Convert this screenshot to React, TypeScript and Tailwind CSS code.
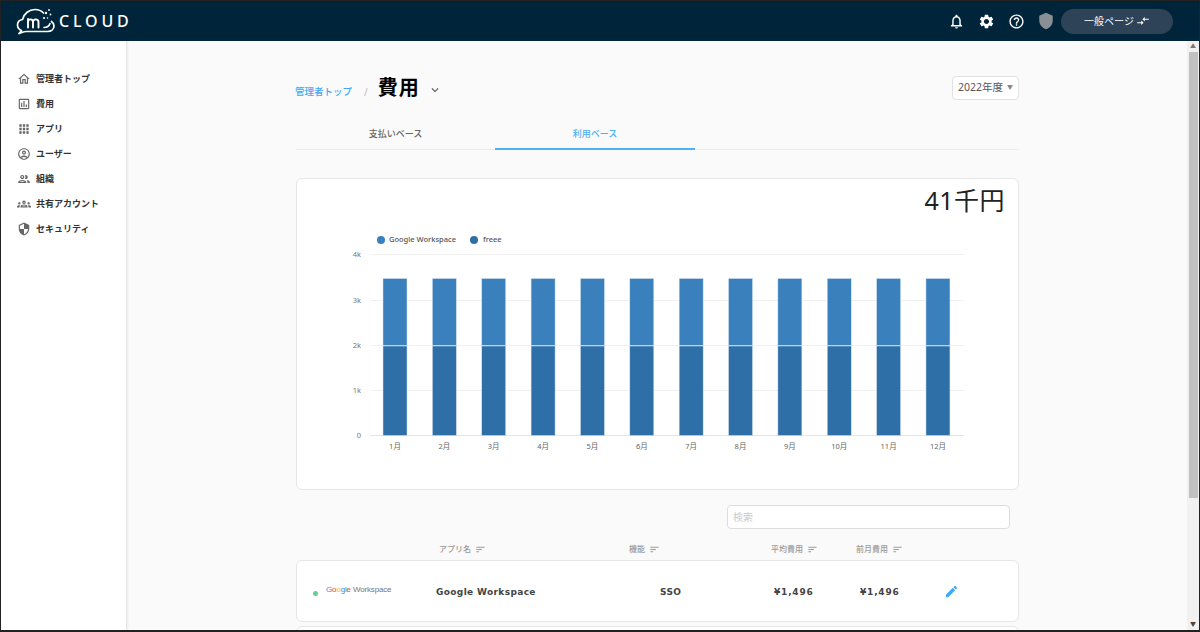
import React from "react";
import {
  MdApps,
  MdEdit,
  MdKeyboardArrowDown,
  MdNotificationsNone,
  MdOutlineAccountCircle,
  MdOutlineAssessment,
  MdOutlineGroups,
  MdOutlineHelpOutline,
  MdOutlineHome,
  MdOutlinePeople,
  MdSecurity,
  MdSettings,
  MdShield,
  MdSort,
  MdCompareArrows,
} from "react-icons/md";

const font = "font-['Noto_Sans','Noto_Sans_CJK_JP',sans-serif]";

const navItems = [
  { label: "管理者トップ", icon: MdOutlineHome },
  { label: "費用", icon: MdOutlineAssessment },
  { label: "アプリ", icon: MdApps },
  { label: "ユーザー", icon: MdOutlineAccountCircle },
  { label: "組織", icon: MdOutlinePeople },
  { label: "共有アカウント", icon: MdOutlineGroups },
  { label: "セキュリティ", icon: MdSecurity },
];

const months = ["1月", "2月", "3月", "4月", "5月", "6月", "7月", "8月", "9月", "10月", "11月", "12月"];
const ticks = [
  { label: "4k", y: 75 },
  { label: "3k", y: 121 },
  { label: "2k", y: 166 },
  { label: "1k", y: 211 },
  { label: "0", y: 256 },
];

const Logo = () => (
  <svg width="40" height="28" viewBox="0 0 40 28" fill="none" className="text-white">
    <path
      d="M3 26.500C4.500 25.500 5 24.500 5.500 23.500C3 22.500 1.500 20.500 1.500 18C1.500 15 3.500 13 6.500 12.500C8 6.500 13 2.500 19 2.500C22.500 2.500 25.500 4 27.500 6M3 26.500C6 25.500 8 24.500 10.500 24.500H31.500C35.500 24.500 38 22 38 19C38 17 37 15.500 35.500 14.500"
      stroke="currentColor"
      strokeWidth="1.700"
      strokeLinecap="round"
      strokeLinejoin="round"
    />
    <path
      d="M12 20.500v-8.500M12 15c0-3.500 5-3.500 5 0v5.500M17 15c0-3.500 5.500-3.500 5.500 0v5.500"
      stroke="currentColor"
      strokeWidth="1.900"
      strokeLinecap="round"
    />
    <path d="M28 20.500c2.500 0 5-1 6-4" stroke="currentColor" strokeWidth="1.600" strokeLinecap="round" />
    <circle cx="30" cy="6" r="1.200" fill="currentColor" />
    <circle cx="33" cy="3" r=".9" fill="currentColor" />
    <circle cx="34.500" cy="7.500" r=".9" fill="currentColor" />
    <circle cx="28" cy="11" r="1.100" fill="currentColor" />
    <circle cx="31.500" cy="11" r=".8" fill="currentColor" />
  </svg>
);

const Chart = () => (
  <svg width="722" height="290" viewBox="0 0 722 290" className="block">
    {ticks.map((t) => (
      <g key={t.label}>
        <line x1="73" x2="667" y1={t.y + 0.5} y2={t.y + 0.5} stroke={t.label === "0" ? "#dfe6f0" : "#f0f0f0"} strokeWidth="1" />
        <text x="64" y={t.y + 3} textAnchor="end" fontSize="7.500" fill="#777">
          {t.label}
        </text>
      </g>
    ))}
    {months.map((m, i) => {
      const x = 86 + i * 49.360;
      return (
        <g key={m}>
          <rect x={x} y="99.500" width="24" height="67" fill="#3a80bc" stroke="#d7e4f2" strokeWidth=".5" />
          <rect x={x} y="167" width="24" height="89.500" fill="#2f6fa8" stroke="#d7e4f2" strokeWidth=".5" />
          <text x={x + 12} y="270" textAnchor="middle" fontSize="7.500" fill="#666">
            {m}
          </text>
        </g>
      );
    })}
  </svg>
);

const SortLabel = ({ label, className }: { label: string; className: string }) => (
  <div className={`flex items-center gap-1 text-[8px] text-[#9a9a9a] ${className}`}>
    {label}
    <MdSort size={11} />
  </div>
);

export default function App() {
  return (
    <div className={`${font} flex h-screen flex-col overflow-hidden border border-b-2 border-[#222] bg-[#fafafa]`}>
      <header className="flex h-10 shrink-0 items-center bg-[#00243a] pl-[15px] text-white">
        <Logo />
        <span className="ml-[3px] text-[16px] font-medium tracking-[0.24em]">CLOUD</span>
        <div className="ml-auto flex items-center">
          <MdNotificationsNone size={17} />
          <MdSettings size={17} className="ml-[13px]" />
          <MdOutlineHelpOutline size={17} className="ml-[13px]" />
          <MdShield size={18} className="ml-[12px] text-[#8a8f93]" />
          <button className="ml-[6px] flex h-[25px] w-[112px] items-center justify-center gap-0.5 rounded-full bg-[#2e4258] text-[10px]">
            一般ページ
            <MdCompareArrows size={14} />
          </button>
          <div className="w-[26px]" />
        </div>
      </header>

      <div className="flex min-h-0 flex-1">
        <aside className="w-[126px] shrink-0 border-r border-[#e4e4e4] bg-white pt-[25px] shadow-[1px_0_2px_rgba(0,0,0,0.05)]">
          {navItems.map(({ label, icon: Icon }) => (
            <div key={label} className="flex h-[25px] items-center gap-[5px] pl-[16px] text-[9px] font-semibold text-[#333]">
              <Icon size={14} className="text-[#666]" />
              {label}
            </div>
          ))}
        </aside>

        <main className="min-w-0 flex-1 overflow-hidden pl-[169px]">
          <div className="w-[723px]">
            <div className="flex h-[60px] items-center pt-[35px]">
              <span className="mt-[7px] -ml-px text-[9.500px] font-medium text-[#3fa9f5]">管理者トップ</span>
              <span className="mt-[7px] ml-[12px] text-[10px] text-[#bbb]">/</span>
              <h1 className="mb-[2px] ml-[10px] text-[20px] leading-none font-bold tracking-[0.05em] text-black">費用</h1>
              <MdKeyboardArrowDown size={14} className="mt-[3px] ml-[8px] text-[#555]" />
              <div className="mb-[2px] ml-auto flex h-6 w-[67px] items-center justify-center gap-1 rounded border border-[#e2e2e2] bg-white text-[10.500px] text-[#555]">
                2022年度
                <span className="text-[6px] text-[#888]">▼</span>
              </div>
            </div>

            <div className="mt-[18px] flex h-[31px] border-b border-[#ebebeb] text-[9px] font-medium">
              <div className="flex h-full w-[199px] items-center justify-center text-[#666]">支払いベース</div>
              <div className="flex h-[31px] w-[200px] items-center justify-center border-b-2 border-[#4db2f5] text-[#4db2f5]">
                利用ベース
              </div>
            </div>

            <section className="relative mt-[28px] h-[312px] overflow-hidden rounded-md border border-[#e6e6e6] bg-white">
              <div className="flex justify-end pt-[3px] pr-[13px] text-[25px] leading-[36px] tracking-[0.02em] text-[#222]">41千円</div>
              <div className="mt-[12px] flex h-[20px] items-center pl-[80px] text-[7.500px] font-medium text-[#555]">
                <span className="mr-[4px] h-2 w-2 rounded-full bg-[#3a80bc]" />
                Google Workspace
                <span className="mr-[5px] ml-[14px] h-2 w-2 rounded-full bg-[#2f6fa8]" />
                freee
              </div>
              <div className="absolute top-0 left-0">
                <Chart />
              </div>
            </section>

            <div className="mt-[15px] flex justify-end pr-[9px]">
              <div className="flex h-6 w-[283px] items-center rounded border border-[#ddd] bg-white px-[5px] text-[10px] text-[#ccc]">
                検索
              </div>
            </div>

            <div className="flex h-[31px] items-center pt-[9px] font-medium">
              <SortLabel label="アプリ名" className="ml-[143px] w-[190px]" />
              <SortLabel label="機能" className="w-[142px]" />
              <SortLabel label="平均費用" className="w-[85px]" />
              <SortLabel label="前月費用" className="w-[80px]" />
            </div>

            <div className="flex h-[62px] items-center rounded-md border border-[#e6e6e6] bg-white pt-[4px] font-['DejaVu_Sans',sans-serif] text-[9px] font-bold tracking-[0.04em] text-[#444]">
              <span className="ml-[16px] h-[5px] w-[5px] rounded-full bg-[#66d18e]" />
              <span className="ml-[8px] w-[110px] pb-[6px] font-['Liberation_Sans',sans-serif] text-[8px] font-normal tracking-[-0.02em] whitespace-nowrap">
                <span className="text-[#4285f4]">G</span>
                <span className="text-[#ea4335]">o</span>
                <span className="text-[#fbbc05]">o</span>
                <span className="text-[#4285f4]">g</span>
                <span className="text-[#34a853]">l</span>
                <span className="text-[#ea4335]">e</span>
                <span className="text-[#777]"> Workspace</span>
              </span>
              <span className="w-[224px]">Google Workspace</span>
              <span className="w-[114px]">SSO</span>
              <span className="w-[86px] tracking-[0.09em]">¥1,496</span>
              <span className="w-[84px] tracking-[0.09em]">¥1,496</span>
              <MdEdit size={15} className="mb-[4px] text-[#3fa9f5]" />
            </div>
            <div className="mt-[4px] h-[62px] rounded-md border border-[#e6e6e6] bg-white" />
          </div>
        </main>

        <div className="flex w-[12px] shrink-0 flex-col items-center bg-[#f1f1f1]">
          <span className="h-[11px] text-[6px] leading-[11px] text-[#777]">▲</span>
          <div className="h-[446px] w-[9px] bg-[#c1c1c1]" />
          <span className="mt-auto h-[11px] text-[6px] leading-[11px] text-[#444]">▼</span>
        </div>
      </div>
    </div>
  );
}
